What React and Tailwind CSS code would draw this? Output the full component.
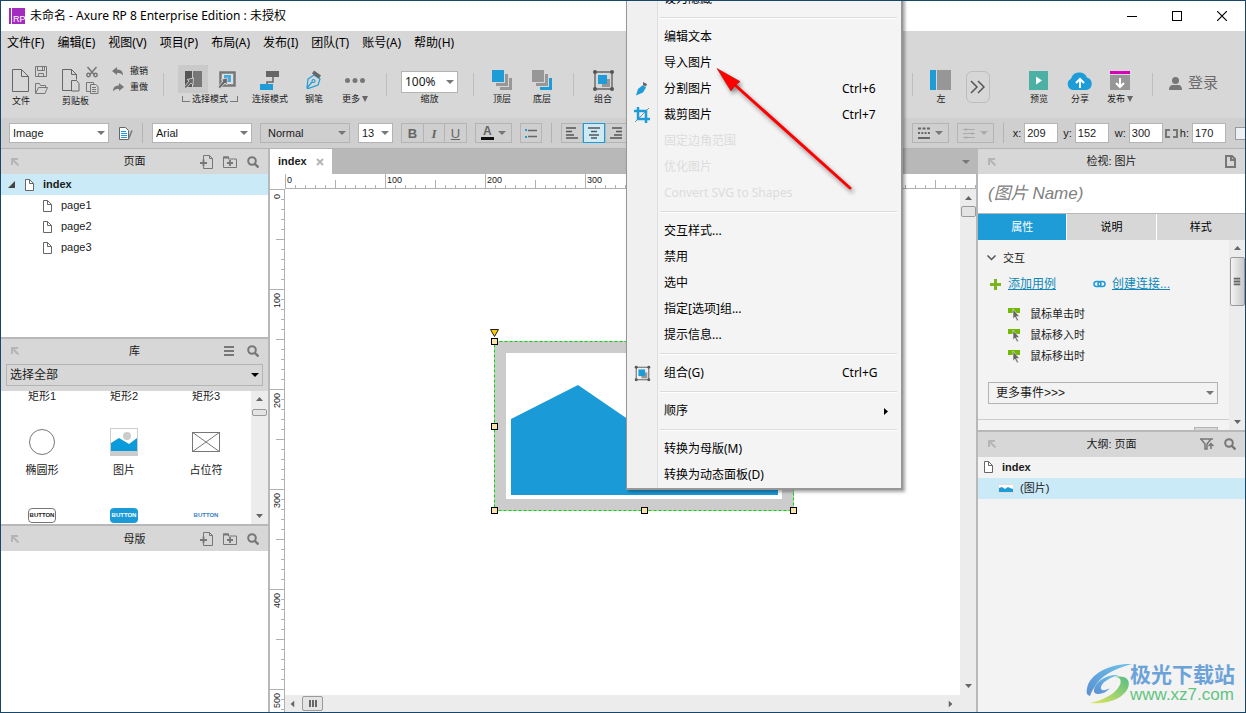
import { useEffect, useRef, useState } from 'react'
import clsx from 'clsx'

const menus = ['文件(F)', '编辑(E)', '视图(V)', '项目(P)', '布局(A)', '发布(I)', '团队(T)', '账号(A)', '帮助(H)']

const contextItems = [
  { label: '设为隐藏' },
  { divider: true },
  { label: '编辑文本' },
  { label: '导入图片' },
  { label: '分割图片', keys: 'Ctrl+6', icon: 'knife' },
  { label: '裁剪图片', keys: 'Ctrl+7', icon: 'crop' },
  { label: '固定边角范围', disabled: true },
  { label: '优化图片', disabled: true },
  { label: 'Convert SVG to Shapes', disabled: true },
  { divider: true },
  { label: '交互样式...' },
  { label: '禁用' },
  { label: '选中' },
  { label: '指定[选项]组...' },
  { label: '提示信息...' },
  { divider: true },
  { label: '组合(G)', keys: 'Ctrl+G', icon: 'group' },
  { divider: true },
  { label: '顺序', submenu: true },
  { divider: true },
  { label: '转换为母版(M)' },
  { label: '转换为动态面板(D)' },
]

const inspectorTabs = ['属性', '说明', '样式']
const mouseEvents = ['鼠标单击时', '鼠标移入时', '鼠标移出时']

function App() {
  return (
    <div className="relative flex h-screen flex-col overflow-hidden border border-[#174668] bg-[#d7d7d7] font-['Liberation_Sans','Noto_Sans_CJK_SC',sans-serif] text-[11px] text-[#1a1a1a]">
      <TitleBar />
      <MenuBar />
      <Toolbar />
      <FormatBar />
      <main className="flex min-h-0 flex-1">
        <aside className="flex w-[269px] shrink-0 flex-col border-r-2 border-[#b8b8b8] bg-white">
          <PagesPanel />
          <LibraryPanel />
          <section className="min-h-0 flex-1 basis-0 border-t-2 border-[#b8b8b8]">
            <PanelHeader title="母版"><AddPageIcon /><AddFolderIcon /><SearchIcon /></PanelHeader>
          </section>
        </aside>
        <Workspace />
        <aside className="flex w-[269px] shrink-0 flex-col border-l-2 border-[#b8b8b8] bg-[#f3f3f3]">
          <Inspector />
          <Outline />
        </aside>
      </main>
      <ContextMenu />
      <PointerArrow />
      <Watermark />
    </div>
  )
}

function TitleBar() {
  return (
    <header className="flex h-[30px] shrink-0 items-center bg-white pl-2 text-black">
      <svg width="16" height="16" viewBox="0 0 16 16">
        <rect width="16" height="16" fill="#a32bc0" />
        <rect x="2" width="1" height="16" fill="#fff" />
        <text x="4" y="14" fontSize="9" fontFamily="Liberation Sans" fill="#fff">RP</text>
      </svg>
      <h1 className="ml-[5px] font-['Noto_Sans','Noto_Sans_CJK_SC',sans-serif] text-[12px]">未命名 - Axure RP 8 Enterprise Edition : 未授权</h1>
      <div className="ml-auto flex pr-px">
        <button type="button" aria-label="Minimize" className="flex h-7 w-[45px] items-center justify-center">
          <svg width="10" height="10"><path d="M0 5.500h10" stroke="#000" /></svg>
        </button>
        <button type="button" aria-label="Maximize" className="flex h-7 w-[45px] items-center justify-center">
          <svg width="10" height="10"><rect x=".5" y=".5" width="9" height="9" fill="none" stroke="#000" /></svg>
        </button>
        <button type="button" aria-label="Close" className="flex h-7 w-[45px] items-center justify-center">
          <svg width="10" height="10"><path d="M0 0l10 10M10 0L0 10" stroke="#000" strokeWidth="1.2" /></svg>
        </button>
      </div>
    </header>
  )
}

function MenuBar() {
  return (
    <nav className="flex h-6 shrink-0 items-center gap-[13px] pl-1.5 font-['Noto_Sans','Noto_Sans_CJK_SC',sans-serif] text-[12px] text-black">
      {menus.map((item) => (
        <button type="button" key={item} className="whitespace-nowrap">{item}</button>
      ))}
    </nav>
  )
}

function Toolbar() {
  return (
    <div className="flex h-[63px] shrink-0 items-start pt-2.5 pl-px text-[9px] leading-3">
      <div className="w-14 shrink-0 pl-2.5">
        <div className="flex h-[30px] items-center gap-1.5">
          <button type="button" aria-label="New"><PageIcon width={17} height={23} /></button>
          <div className="flex flex-col gap-1.5">
            <button type="button" aria-label="Save"><SaveIcon /></button>
            <button type="button" aria-label="Open"><OpenIcon /></button>
          </div>
        </div>
        <div>文件</div>
      </div>
      <div className="w-[46px] shrink-0 pl-1">
        <div className="flex h-[30px] items-center gap-1.5">
          <button type="button" aria-label="Paste"><PasteIcon /></button>
          <div className="flex flex-col gap-1">
            <button type="button" aria-label="Cut"><CutIcon /></button>
            <button type="button" aria-label="Copy"><CopyIcon /></button>
          </div>
        </div>
        <div>剪贴板</div>
      </div>
      <div className="flex w-[59px] shrink-0 flex-col gap-1 pl-2">
        <button type="button" className="flex items-center gap-1.5"><UndoIcon />撤销</button>
        <button type="button" className="flex items-center gap-1.5"><UndoIcon flip />重做</button>
      </div>
      <Separator />
      <div className="ml-3.5 shrink-0">
        <div className="flex gap-1">
          <button type="button" aria-label="Select intersected" className="flex h-7 w-[30px] items-center justify-center bg-[#cacaca]"><IntersectIcon /></button>
          <button type="button" aria-label="Select contained" className="flex h-7 w-[30px] items-center justify-center"><ContainIcon /></button>
        </div>
        <div className="flex items-center justify-center">
          <span className="mr-0.5 h-1.5 w-2 border-b border-l border-[#777]" />选择模式
          <span className="ml-0.5 h-1.5 w-2 border-r border-b border-[#777]" />
        </div>
      </div>
      <Tool label="连接模式" className="ml-1.5 w-11"><ConnectIcon /></Tool>
      <Tool label="钢笔" className="w-11"><PenIcon /></Tool>
      <Tool label="更多" caret className="w-[38px]">
        <svg width="20" height="5" fill="#777"><circle cx="2.500" cy="2.500" r="2.500" /><circle cx="10" cy="2.500" r="2.500" /><circle cx="17.500" cy="2.500" r="2.500" /></svg>
      </Tool>
      <Separator className="ml-3" />
      <label className="mt-1.5 ml-3.5 flex w-[57px] shrink-0 flex-col items-center">
        <Select value="100%" className="h-[22px] w-full font-['Noto_Sans',sans-serif] text-[12px]" />
        <span>缩放</span>
      </label>
      <Separator className="ml-[15px]" />
      <Tool label="顶层" className="ml-2 w-10"><LayerIcon front /></Tool>
      <Tool label="底层" className="w-10"><LayerIcon /></Tool>
      <Separator className="ml-[11px]" />
      <Tool label="组合" className="ml-[9px] w-10"><GroupIcon size={23} /></Tool>
      <div className="flex-1" />
      <Separator />
      <Tool label="左" className="ml-2 w-10">
        <svg width="21" height="20"><path d="M0 0h6v20H0z" fill="#1e9cd7" /><path d="M7 0h14v20H7z" fill="#979797" /></svg>
      </Tool>
      <button type="button" aria-label="More tools" className="mt-1.5 ml-[5px] flex h-8 w-6 items-center justify-center rounded-md border border-[#bdbdbd]">
        <svg width="15" height="14" fill="none" stroke="#555" strokeWidth="1.500"><path d="M1 1l6 6-6 6M8 1l6 6-6 6" /></svg>
      </button>
      <Tool label="预览" className="ml-[29px] w-10">
        <svg width="19" height="19"><path d="M0 0h19v19H0z" fill="#4cb0a5" /><path d="M7 5.500l6 4-6 4z" fill="#fff" /></svg>
      </Tool>
      <Tool label="分享" className="ml-px w-10">
        <svg width="26" height="19"><path d="M6 19a6 6 0 0 1-2-11.300A8.500 8.500 0 0 1 20 6.500 6.500 6.500 0 0 1 20 19z" fill="#1e9cd7" /><path d="M13 17V9M9 12l4-4 4 4" fill="none" stroke="#fff" strokeWidth="2" /></svg>
      </Tool>
      <Tool label="发布" caret className="w-10">
        <svg width="20" height="19"><path d="M0 0h20v3H0z" fill="#d600b6" /><path d="M0 4h20v15H0z" fill="#979797" /><path d="M10 7v8M6 12l4 4 4-4" fill="none" stroke="#fff" strokeWidth="2" /></svg>
      </Tool>
      <Separator className="ml-3" />
      <button type="button" className="mt-2 mr-[27px] ml-4 flex shrink-0 items-center gap-1.5 text-[15px] leading-5 text-[#6b6b6b]">
        <svg width="13" height="13" fill="#777"><circle cx="6.500" cy="3.500" r="3.500" /><path d="M0 13c0-4 2-5 4-5h5c2 0 4 1 4 5z" /></svg>
        登录
      </button>
    </div>
  )
}

function Tool({ label, caret, className, children }) {
  return (
    <button type="button" className={clsx('flex shrink-0 flex-col items-center whitespace-nowrap', className)}>
      <span className="mt-0.5 flex h-[26px] items-center">{children}</span>
      <span className="flex items-center gap-0.5">
        {label}
        {caret && <svg width="6" height="6"><path d="M0 0h6L3 6z" fill="#666" /></svg>}
      </span>
    </button>
  )
}

function Separator({ className }) {
  return <span className={clsx('mt-2 h-[23px] w-px shrink-0 bg-[#bebebe]', className)} />
}

function Caret({ dark }) {
  return <svg width="8" height="4" className="shrink-0"><path d="M0 0h8L4 4z" fill={dark ? '#000' : '#777'} /></svg>
}

function Select({ value, label, className, tone = 'bg-white', dark }) {
  return (
    <span className={clsx('relative flex shrink-0 items-center border border-[#b4b4b4]', tone, className)}>
      <select aria-label={label || value} className="h-full w-full appearance-none bg-transparent px-[3px] outline-none">
        <option>{value}</option>
      </select>
      <span className="pointer-events-none absolute right-[3px]"><Caret dark={dark} /></span>
    </span>
  )
}

function FormatBar() {
  return (
    <div className="flex h-[31px] shrink-0 items-center border-b border-[#b4b4b4] bg-[#cfcfcf] pl-2">
      <Select value="Image" className="h-5 w-[100px]" />
      <button type="button" aria-label="Edit style" className="ml-2.5"><StyleIcon /></button>
      <Bar className="ml-[9px]" />
      <Select value="Arial" className="ml-[9px] h-5 w-[100px]" />
      <Select value="Normal" tone="bg-transparent" className="ml-2 h-5 w-[90px] pl-1" />
      <Select value="13" label="Font size" className="ml-2 h-5 w-[35px]" />
      <div className="ml-2 flex h-5 shrink-0 border border-[#b4b4b4] text-[13px] text-[#666]">
        <button type="button" className="w-[21px] font-bold">B</button>
        <button type="button" className="w-[22px] border-x border-[#b4b4b4] font-['Liberation_Serif',serif] font-bold italic">I</button>
        <button type="button" className="w-[21px] underline">U</button>
      </div>
      <button type="button" className="ml-2 flex h-5 w-[37px] shrink-0 items-center justify-between border border-[#b4b4b4] px-[5px]">
        <span className="border-b-[3px] border-[#111] px-0.5 text-[12px] leading-[11px] font-bold text-[#666]">A</span>
        <Caret />
      </button>
      <button type="button" aria-label="Bullets" className="ml-2 flex h-5 w-[22px] shrink-0 items-center justify-center border border-[#b4b4b4]">
        <svg width="12" height="9"><path d="M0 1h2M0 8h2" stroke="#1e9cd7" strokeWidth="2" /><path d="M3 1.500h9M3 7.500h9" stroke="#666" strokeWidth="1.500" /></svg>
      </button>
      <Bar className="ml-[9px]" />
      <div className="ml-[9px] flex h-5 shrink-0">
        <AlignButton d="M0 1h10M0 4.500h6M0 8h8M0 11h12" label="Align left" />
        <AlignButton d="M0 1h12M3 4.500h6M1 8h10M3 11h6" label="Align center" active />
        <AlignButton d="M2 1h10M6 4.500h6M4 8h8M0 11h12" label="Align right" />
      </div>
      <div className="flex-1" />
      <button type="button" aria-label="Line style" className="flex h-5 w-[37px] shrink-0 items-center justify-between border border-[#b4b4b4] px-[5px]">
        <svg width="12" height="12" stroke="#666" strokeWidth="2"><path d="M0 1.500h12" strokeDasharray="3 1.500" /><path d="M0 6h12" strokeDasharray="2 1.300" /><path d="M0 11h12" /></svg>
        <Caret />
      </button>
      <button type="button" disabled aria-label="Arrow style" className="ml-2 flex h-5 w-[37px] shrink-0 items-center justify-between border border-[#b4b4b4] px-[5px]">
        <svg width="12" height="11" stroke="#aaa"><path d="M0 1.500h12M0 5.500h12M0 9.500h12M3 0v3M9 4v3M3 8v3" /></svg>
        <span className="opacity-40"><Caret /></span>
      </button>
      <Bar className="ml-[9px]" />
      <NumberField name="x:" value="209" className="ml-[9px]" />
      <NumberField name="y:" value="152" className="ml-[5px]" />
      <NumberField name="w:" value="300" className="ml-1.5" />
      <svg width="13" height="9" className="ml-0.5 shrink-0" fill="none" stroke="#777" strokeWidth="2"><path d="M5 1H1v7h4M8 1h4v7H8" /></svg>
      <NumberField name="h:" value="170" className="ml-0.5" />
      <input type="checkbox" aria-label="Hidden" className="ml-[9px] h-[13px] w-2.5 shrink-0 appearance-none border border-r-0 border-[#999] bg-[#eef0f4]" />
    </div>
  )
}

function Bar({ className }) {
  return <span className={clsx('h-5 w-px shrink-0 bg-[#b4b4b4]', className)} />
}

function AlignButton({ d, label, active }) {
  return (
    <button type="button" aria-label={label} className={clsx('flex w-[22px] items-center justify-center border', active ? 'border-[#1e9cd7] bg-[#ccebf7]' : 'border-[#b4b4b4]')}>
      <svg width="12" height="12" stroke="#555" strokeWidth="1.500"><path d={d} /></svg>
    </button>
  )
}

function NumberField({ name, value, className }) {
  return (
    <label className={clsx('flex shrink-0 items-center', className)}>
      <span className="mr-[3px]">{name}</span>
      <input defaultValue={value} className="h-5 w-[34px] border border-[#b4b4b4] bg-white px-0.5 outline-none" />
    </label>
  )
}

function PanelHeader({ title, children }) {
  return (
    <div className="relative flex h-[25px] shrink-0 items-center justify-center bg-[#d7d7d7]">
      <svg width="8" height="8" className="absolute left-2.5" fill="none" stroke="#b5b5b5" strokeWidth="2"><path d="M7 1H1v6M1 1l6.500 6.500" /></svg>
      <h2>{title}</h2>
      <div className="absolute right-[9px] flex items-center gap-2.5">{children}</div>
    </div>
  )
}

function PagesPanel() {
  return (
    <section className="min-h-0 flex-1 basis-0 pb-0.5">
      <PanelHeader title="页面"><AddPageIcon /><AddFolderIcon /><SearchIcon /></PanelHeader>
      <ul>
        <li className="flex h-[21px] items-center bg-[#cbeaf7] pl-[7px] font-bold">
          <svg width="7" height="7" className="mr-2.5"><path d="M7 0v7H0z" fill="#444" /></svg>
          <PageIcon width={9} height={12} />
          <span className="ml-[9px]">index</span>
        </li>
        {['page1', 'page2', 'page3'].map((page) => (
          <li key={page} className="flex h-[21px] items-center pl-[42px]">
            <PageIcon width={9} height={12} />
            <span className="ml-[9px]">{page}</span>
          </li>
        ))}
      </ul>
    </section>
  )
}

function LibraryPanel() {
  return (
    <section className="flex min-h-0 flex-1 basis-0 flex-col border-t-2 border-[#b8b8b8] bg-[#d7d7d7]">
      <PanelHeader title="库">
        <svg width="10" height="10" className="mr-[3px]" stroke="#777" strokeWidth="2"><path d="M0 1h10M0 5h10M0 9h10" /></svg>
        <SearchIcon />
      </PanelHeader>
      <Select value="选择全部" tone="bg-transparent" dark className="mx-[5px] mb-[5px] h-[22px] text-[12px]" />
      <div className="flex min-h-0 flex-1 overflow-hidden bg-white">
        <div className="-mt-[37px] grid flex-1 auto-rows-[50px] grid-cols-3 gap-y-6 pr-1">
          <Widget label="矩形1"><span className="h-5 w-7 border border-[#777]" /></Widget>
          <Widget label="矩形2"><span className="h-5 w-7 bg-[#ccc]" /></Widget>
          <Widget label="矩形3"><span className="h-5 w-7 bg-[#999]" /></Widget>
          <Widget label="椭圆形"><span className="size-[26px] rounded-full border border-[#777]" /></Widget>
          <Widget label="图片"><PictureIcon /></Widget>
          <Widget label="占位符">
            <svg width="28" height="20" fill="none" stroke="#777"><rect x=".5" y=".5" width="27" height="19" /><path d="M0 0l28 20M28 0L0 20" /></svg>
          </Widget>
          <Widget><span className="w-7 rounded-sm border border-[#777] text-center text-[6px] leading-[13px] font-bold">BUTTON</span></Widget>
          <Widget><span className="w-7 rounded-sm bg-[#1a9bd7] text-center text-[6px] leading-[15px] font-bold text-white">BUTTON</span></Widget>
          <Widget><span className="text-[6px] font-bold text-[#3b7fc4]">BUTTON</span></Widget>
        </div>
        <div className="flex w-[17px] shrink-0 flex-col items-center justify-between bg-[#ececec] py-1.5">
          <div className="flex flex-col items-center gap-2">
            <ScrollArrow />
            <span className="h-[7px] w-[15px] rounded-xs border border-[#999] bg-[#e4e4e4]" />
          </div>
          <ScrollArrow className="rotate-180" />
        </div>
      </div>
    </section>
  )
}

function Widget({ label, children }) {
  return (
    <div className="flex flex-col items-center">
      <div className="flex h-7 items-center">{children}</div>
      {label && <span className="mt-1.5 leading-4">{label}</span>}
    </div>
  )
}

function ScrollArrow({ className }) {
  return <svg width="7" height="4" className={clsx('shrink-0', className)}><path d="M0 4h7L3.500 0z" fill="#666" /></svg>
}

// One unit of the ruler is one canvas pixel: a tick every 10, a label every 100.
function Ruler({ vertical, className }) {
  const ref = useRef(null)
  const [length, setLength] = useState(0)

  useEffect(() => {
    const measure = () => setLength(vertical ? ref.current.clientHeight : ref.current.clientWidth)
    measure()
    window.addEventListener('resize', measure)

    return () => window.removeEventListener('resize', measure)
  }, [vertical])

  const ticks = Array.from({ length: Math.ceil(length / 10) }, (_, index) => index * 10)
  const sizeOf = (at) => (at % 100 === 0 ? 15 : at % 50 === 0 ? 9 : 4)

  return (
    <div ref={ref} className={clsx('relative shrink-0 overflow-hidden border-[#b0b0b0]', className)}>
      <svg className="absolute top-0 left-0" width={vertical ? 15 : length} height={vertical ? length : 15} stroke="#b0b0b0">
        {ticks.map((at) => vertical
          ? <path key={at} d={`M${15 - sizeOf(at)} ${at + 0.5}H15`} />
          : <path key={at} d={`M${at + 0.5} ${15 - sizeOf(at)}V15`} />)}
        {ticks.filter((at) => at % 100 === 0).map((at) => (
          <text
            key={at}
            fontSize="9"
            fill="#222"
            stroke="none"
            transform={vertical ? `translate(10 ${at + (at ? 19 : 10)}) rotate(-90)` : `translate(${at + 2} 9)`}
          >
            {at}
          </text>
        ))}
      </svg>
    </div>
  )
}

function Workspace() {
  return (
    <section className="flex min-w-0 flex-1 flex-col bg-white">
      <div className="flex h-[25px] shrink-0 items-center bg-[#b8b8b8] pr-1.5">
        <button type="button" className="flex h-full w-[62px] items-center gap-[9px] bg-white pl-2 font-bold">
          index
          <svg width="8" height="8" stroke="#b5b5b5" strokeWidth="2"><path d="M1 1l6 6M7 1L1 7" /></svg>
        </button>
        <span className="ml-auto"><Caret /></span>
      </div>
      <Ruler className="ml-[15px] h-[15px] border-b" />
      <div className="flex min-h-0 flex-1">
        <Ruler vertical className="w-[15px] border-r" />
        <div className="flex min-w-0 flex-1 flex-col">
          <div className="flex min-h-0 flex-1">
            <div className="relative min-w-0 flex-1 overflow-hidden"><SelectedImage /></div>
            <div className="flex w-4 shrink-0 flex-col items-center justify-between bg-[#ececec] py-[7px]">
              <div className="flex flex-col items-center gap-1.5">
                <ScrollArrow />
                <span className="h-[11px] w-[15px] rounded-xs border border-[#999] bg-[#e4e4e4]" />
              </div>
              <ScrollArrow className="rotate-180" />
            </div>
          </div>
          <div className="flex h-[17px] shrink-0 items-center bg-[#ececec] pr-[22px] pl-1">
            <ScrollArrow className="-rotate-90" />
            <span className="ml-1.5 flex h-[15px] w-[21px] items-center justify-center rounded-xs border border-[#999] bg-[#e4e4e4]">
              <Grip />
            </span>
            <ScrollArrow className="ml-auto rotate-90" />
          </div>
        </div>
      </div>
    </section>
  )
}

function Grip({ className }) {
  return <svg width="8" height="7" className={className} stroke="#666" strokeWidth="2"><path d="M1 0v7M4 0v7M7 0v7" /></svg>
}

function SelectedImage() {
  const handles = [[4, 13], [4, 98], [4, 182], [154, 182], [303, 182]]
  return (
    <svg className="absolute top-[139px] left-[205px]" width="310" height="190">
      <path d="M4 13h300v170H4z" fill="#ccc" />
      <path d="M16 25h276v146H16z" fill="#fff" />
      <path d="M21 91L88 57l76 52 60-40 64 44v54H21z" fill="#1a9bd7" />
      <rect x="4.500" y="13.500" width="299" height="169" fill="none" stroke="#0d0" strokeDasharray="3 2" />
      <path d="M.5 1.500h8l-4 7z" fill="#fc0" stroke="#222" />
      {handles.map(([x, y]) => (
        <rect key={`${x}-${y}`} x={x - 2.5} y={y - 2.5} width="6" height="6" fill="#fce4ac" stroke="#000" />
      ))}
    </svg>
  )
}

function Inspector() {
  const [tab, setTab] = useState('属性')

  return (
    <section className="flex min-h-0 flex-1 basis-0 flex-col">
      <PanelHeader title="检视: 图片">
        <svg width="11" height="13" fill="none" stroke="#777" strokeWidth="2"><path d="M1 1h6l3 3v8H1z" /><path d="M6 1v4h4" /></svg>
      </PanelHeader>
      <input aria-label="Name" placeholder="(图片 Name)" className="h-10 shrink-0 border-b border-[#b8b8b8] bg-white px-2.5 text-[17px] italic outline-none placeholder:text-[#808080]" />
      <div className="flex h-[26px] shrink-0 gap-px bg-white">
        {inspectorTabs.map((item) => (
          <button
            type="button"
            key={item}
            onClick={() => setTab(item)}
            className={clsx('flex-1', item === tab ? 'bg-[#1e9cd7] text-white' : 'bg-[#d7d7d7] text-black')}
          >
            {item}
          </button>
        ))}
      </div>
      <div className="flex min-h-0 flex-1 overflow-hidden">
        <div className="min-w-0 flex-1">
          <h3 className="mt-2.5 flex items-center gap-[7px] pl-[9px] leading-4">
            <svg width="9" height="6" fill="none" stroke="#555" strokeWidth="1.500"><path d="M.5.5l4 4 4-4" /></svg>
            交互
          </h3>
          <div className="mt-2.5 flex items-center text-[12px] leading-4 text-[#0f88b8]">
            <svg width="11" height="11" className="ml-3 shrink-0" stroke="#7ab61b" strokeWidth="3"><path d="M5.500 0v11M0 5.500h11" /></svg>
            <a href="#case" className="ml-[7px] underline">添加用例</a>
            <svg width="13" height="8" className="ml-[37px] shrink-0" fill="none" stroke="#1e9cd7" strokeWidth="1.500"><rect x="1" y="1.500" width="7" height="5" rx="2.500" /><rect x="5" y="1.500" width="7" height="5" rx="2.500" /></svg>
            <a href="#link" className="ml-1.5 underline">创建连接...</a>
          </div>
          <ul className="mt-3">
            {mouseEvents.map((event) => (
              <li key={event} className="flex h-[21px] items-center gap-2.5 pl-[30px]">
                <svg width="12" height="13"><path d="M0 0h12v5H0z" fill="#72b800" /><path d="M5 1v10l2-2 2 4 1.500-1-2-3.500h3z" fill="#666" stroke="#f3f3f3" strokeWidth=".6" /></svg>
                {event}
              </li>
            ))}
          </ul>
          <Select value="更多事件>>>" tone="bg-[#f3f3f3]" className="mt-[15px] mr-[11px] ml-2.5 h-[22px] pl-1 text-[12px]" />
          <div className="mt-[15px] border-t border-[#ccc] pt-[7px] pr-[11px]">
            <div className="ml-auto h-5 w-6 border border-[#b4b4b4] bg-[#d7d7d7]" />
          </div>
        </div>
        <div className="flex w-4 shrink-0 flex-col items-center justify-between bg-[#ececec] py-1.5">
          <div className="flex flex-col items-center gap-[7px]">
            <ScrollArrow />
            <span className="flex h-[49px] w-[15px] items-center justify-center rounded-xs border border-[#999] bg-gradient-to-r from-[#f4f4f4] to-[#c8c8cc]">
              <Grip className="rotate-90" />
            </span>
          </div>
          <ScrollArrow className="rotate-180" />
        </div>
      </div>
    </section>
  )
}

function Outline() {
  return (
    <section className="min-h-0 flex-1 basis-0 border-t-2 border-[#b8b8b8]">
      <PanelHeader title="大纲: 页面">
        <svg width="14" height="12" fill="none" stroke="#777" strokeWidth="1.500"><path d="M0 1h13M1 1l4 5v5h2V6l4-5M11 11V6M8.500 8L11 5.500 13.500 8" /></svg>
        <SearchIcon />
      </PanelHeader>
      <ul>
        <li className="flex h-[21px] items-center gap-[9px] pl-1.5 font-bold"><PageIcon width={9} height={12} />index</li>
        <li className="flex h-[21px] items-center gap-1.5 bg-[#cbeaf7] pl-5">
          <svg width="16" height="9"><path d="M0 0h16v9H0z" fill="#ddd" /><path d="M1 1h14v7H1z" fill="#fff" /><path d="M1 8V4l3-1 3 2 3-2 2 1 3 1v3z" fill="#1e9cd7" /></svg>
          (图片)
        </li>
      </ul>
    </section>
  )
}

function ContextMenu() {
  return (
    <div role="menu" className="absolute -top-4 left-[625px] w-[277px] border border-r-2 border-b-2 border-[#979797] bg-[#f4f4f4] font-['Noto_Sans','Noto_Sans_CJK_SC',sans-serif] text-[12px] text-black shadow-[2px_2px_3px_rgba(0,0,0,0.35)]">
      {contextItems.map((item, index) => item.divider ? (
        <div key={index} role="separator" className="flex h-3 items-center">
          <span className="h-full w-[31px] border-r border-[#dedede] bg-[#f0f0f0]" />
          <span className="mr-1 ml-0.5 h-0.5 flex-1 border-t border-[#dcdcdc] bg-white" />
        </div>
      ) : (
        <button type="button" role="menuitem" key={item.label} disabled={item.disabled} className={clsx('flex h-[26px] w-full items-center text-left', item.disabled && 'text-[#dcdcdc]')}>
          <span className="flex h-full w-[31px] items-center justify-center border-r border-[#dedede] bg-[#f0f0f0]">
            {item.icon === 'knife' && <KnifeIcon />}
            {item.icon === 'crop' && <CropIcon />}
            {item.icon === 'group' && <GroupIcon size={17} />}
          </span>
          <span className="flex-1 pl-1.5">{item.label}</span>
          {item.keys && <span className="w-[59px]">{item.keys}</span>}
          {item.submenu && <svg width="4" height="7" className="mr-[13px]"><path d="M0 0v7l4-3.500z" /></svg>}
        </button>
      ))}
    </div>
  )
}

function PointerArrow() {
  return (
    <svg className="pointer-events-none absolute top-[60px] left-[710px] drop-shadow-[2px_3px_2px_rgba(0,0,0,0.45)]" width="150" height="140">
      <path d="M24 24l115 103" stroke="#f00" strokeWidth="3" strokeLinecap="round" />
      <path d="M6 7.500l23 13-5 4-4 5.500z" fill="#f00" stroke="#a00" strokeWidth=".5" />
    </svg>
  )
}

function Watermark() {
  return (
    <div className="pointer-events-none absolute right-2.5 bottom-[7px] flex items-center">
      <svg width="46" height="42" viewBox="0 0 46 42">
        <defs>
          <linearGradient id="sky" x1="0" y1="1" x2="1" y2="0"><stop stopColor="#5b8fd3" /><stop offset="1" stopColor="#6cc3ea" /></linearGradient>
          <linearGradient id="leaf" x1="0" y1="1" x2="1" y2="0"><stop stopColor="#e3e65a" /><stop offset="1" stopColor="#55bd87" /></linearGradient>
        </defs>
        <path d="M46 1C26 0 3 10 1 26c-1 4 0 6 3 7 1-3 2-5 4-8C14 13 27 6 46 1z" fill="url(#sky)" />
        <path d="M33 12c-13-1-24 7-25 15-1 6 11 5 16-2-5 3-10 3-9-1 1-5 10-10 18-12z" fill="url(#sky)" />
        <path d="M29 14c7 0 7 6 3 11-5 7-15 12-28 15 20 2 34-6 38-15 3-8-2-13-13-11z" fill="url(#leaf)" />
      </svg>
      <div className="-ml-0.5">
        <div className="text-[21px] leading-[22px] font-bold text-[#6ba3d9]">极光下载站</div>
        <div className="text-[17px] leading-[18px] text-[#5fc57e]">www.xz7.com</div>
      </div>
    </div>
  )
}

function PageIcon({ width, height }) {
  const fold = Math.round(width * 0.4)
  return (
    <svg width={width} height={height} className="shrink-0" fill="none" stroke="#666">
      <path d={`M.5.5h${width - 1 - fold}l${fold} ${fold}v${height - 1 - fold}h-${width - 1}z`} fill={width < 12 ? '#fff' : 'none'} />
      <path d={`M${width - 0.5 - fold}.5v${fold}h${fold}`} />
    </svg>
  )
}

function SaveIcon() {
  return <svg width="12" height="11" fill="none" stroke="#777"><path d="M.5.5h11v10H.5zM2.500.5v4h7v-4M3.500 10.500v-3h5v3M7.500 1v3" /></svg>
}

function OpenIcon() {
  return <svg width="13" height="11" fill="none" stroke="#777"><path d="M.5 10V.5h4l1 2h5v2M.5 10.500l3-6h9l-2.500 6z" /></svg>
}

function PasteIcon() {
  return <svg width="18" height="23" fill="none" stroke="#666"><path d="M9 21.500H.5V.5h9l5 5v5M9.500.5v5h5M9.500 11.500h5l2.500 3v7.500H9.500z" /></svg>
}

function CutIcon() {
  return <svg width="12" height="12" fill="none" stroke="#777" strokeWidth="1.500"><path d="M1.500 1l7 8M10.500 1l-7 8" /><circle cx="2.500" cy="9" r="1.700" /><circle cx="9.500" cy="9" r="1.700" /></svg>
}

function CopyIcon() {
  return <svg width="13" height="12" fill="none" stroke="#777"><path d="M4 9.500H.5V.5h7v2M4.500 2.500h5l2.500 2v7H4.500zM6 5.500h4M6 7.500h4M6 9.500h4" /></svg>
}

function UndoIcon({ flip }) {
  return <svg width="12" height="9" className={clsx(flip && '-scale-x-100')} fill="#777"><path d="M5 0v2.500c4 0 6 2 6 6-1.500-2-3-2.500-6-2.500V8L0 4z" /></svg>
}

function PointerShape() {
  return <path d="M0 17l5-6-2-1.500L9.500 8 9 15l-2-2-5 5.500z" fill="#666" stroke="#ddd" strokeWidth=".8" />
}

function IntersectIcon() {
  return <svg width="18" height="19"><path d="M1 1h7v16H1z" fill="#555" /><path d="M9 1h9v16H9z" fill="#777" /><PointerShape /></svg>
}

function ContainIcon() {
  return <svg width="18" height="19"><path d="M2.500 2.500h14v13h-14z" fill="#e0e0e0" stroke="#777" strokeWidth="2.500" /><path d="M6 5h7v7H6z" fill="#42aee0" /><PointerShape /></svg>
}

function ConnectIcon() {
  return <svg width="20" height="19"><path d="M6 0h13v6H6z" fill="#666" /><path d="M13 6v5H7v2" fill="none" stroke="#666" strokeWidth="1.500" /><path d="M0 13h13v6H0z" fill="#1e9cd7" /></svg>
}

function PenIcon() {
  return (
    <svg width="16" height="20" fill="none" stroke="#1e9cd7" strokeWidth="1.200">
      <path d="M1 18l1-9 6-4 6 4-2 6-10 3.500zM1 18l5-6" /><circle cx="7.500" cy="11" r="1.500" />
      <path d="M7 2l7 5" stroke="#666" strokeWidth="3.500" />
    </svg>
  )
}

function LayerIcon({ front }) {
  return (
    <svg width="20" height="20">
      <path d="M8 8h12v12H8z" fill={front ? '#979797' : '#1e9cd7'} />
      <path d="M4 4h13v13H4z" fill="#d7d7d7" /><path d="M4 4h12v12H4z" fill="#979797" />
      <path d="M0 0h13v13H0z" fill="#d7d7d7" /><path d="M0 0h12v12H0z" fill={front ? '#1e9cd7' : '#979797'} />
    </svg>
  )
}

function GroupIcon({ size }) {
  return (
    <svg width={size} height={size} viewBox="0 0 23 23">
      <path d="M3 3h17v17H3z" fill="none" stroke="#666" strokeWidth="1.400" />
      <path d="M10 10h8v8h-8z" fill="#979797" /><path d="M6 6h9v9H6z" fill="#1e9cd7" />
      <g fill="#555"><circle cx="3" cy="3" r="2" /><circle cx="20" cy="3" r="2" /><circle cx="3" cy="20" r="2" /><circle cx="20" cy="20" r="2" /></g>
    </svg>
  )
}

function StyleIcon() {
  return (
    <svg width="14" height="13" fill="none">
      <path d="M.5.5h6l3 3v9h-9z" fill="#fff" stroke="#666" /><path d="M2 4.500h5M2 6.500h6M2 8.500h6M2 10.500h6" stroke="#1e9cd7" />
      <path d="M13 3.500L9.500 12" stroke="#777" strokeWidth="1.500" />
    </svg>
  )
}

function AddPageIcon() {
  return <svg width="13" height="14" fill="none" stroke="#777"><path d="M3.500 5V.5h6l3 3v10h-9v-2M9.500.5v3h3" /><path d="M0 8h7M3.500 4.500v7" strokeWidth="1.800" /></svg>
}

function AddFolderIcon() {
  return <svg width="14" height="12" fill="none" stroke="#777"><path d="M.5 11.500V1h5v2h8v8.500z" /><path d="M0 1.500h6" strokeWidth="2" /><path d="M4 7h6M7 4v6" strokeWidth="1.800" /></svg>
}

function SearchIcon() {
  return <svg width="12" height="12" fill="none" stroke="#777" strokeWidth="2"><circle cx="5" cy="5" r="3.800" /><path d="M7.500 7.500l4 4" strokeWidth="2.400" /></svg>
}

function PictureIcon() {
  return (
    <svg width="28" height="28">
      <rect width="28" height="28" fill="#ccc" /><path d="M1 1h26v22H1z" fill="#fff" />
      <circle cx="17" cy="8" r="4" fill="#ccc" /><path d="M1 15l8-5 10 6 8-6v13H1z" fill="#0a9bdc" />
    </svg>
  )
}

function KnifeIcon() {
  return <svg width="12" height="14"><path d="M0 13.500l2-6.500 5-4 3 2.500-3 5z" fill="#1e9cd7" /><path d="M7 0l4 2-1 2.500-3-1.500z" fill="#666" /></svg>
}

function CropIcon() {
  return <svg width="16" height="16" fill="none"><path d="M15 1L1 15" stroke="#888" /><path d="M4 0v12h12M0 4h12v12" stroke="#1e9cd7" strokeWidth="2.500" /></svg>
}

export default App
